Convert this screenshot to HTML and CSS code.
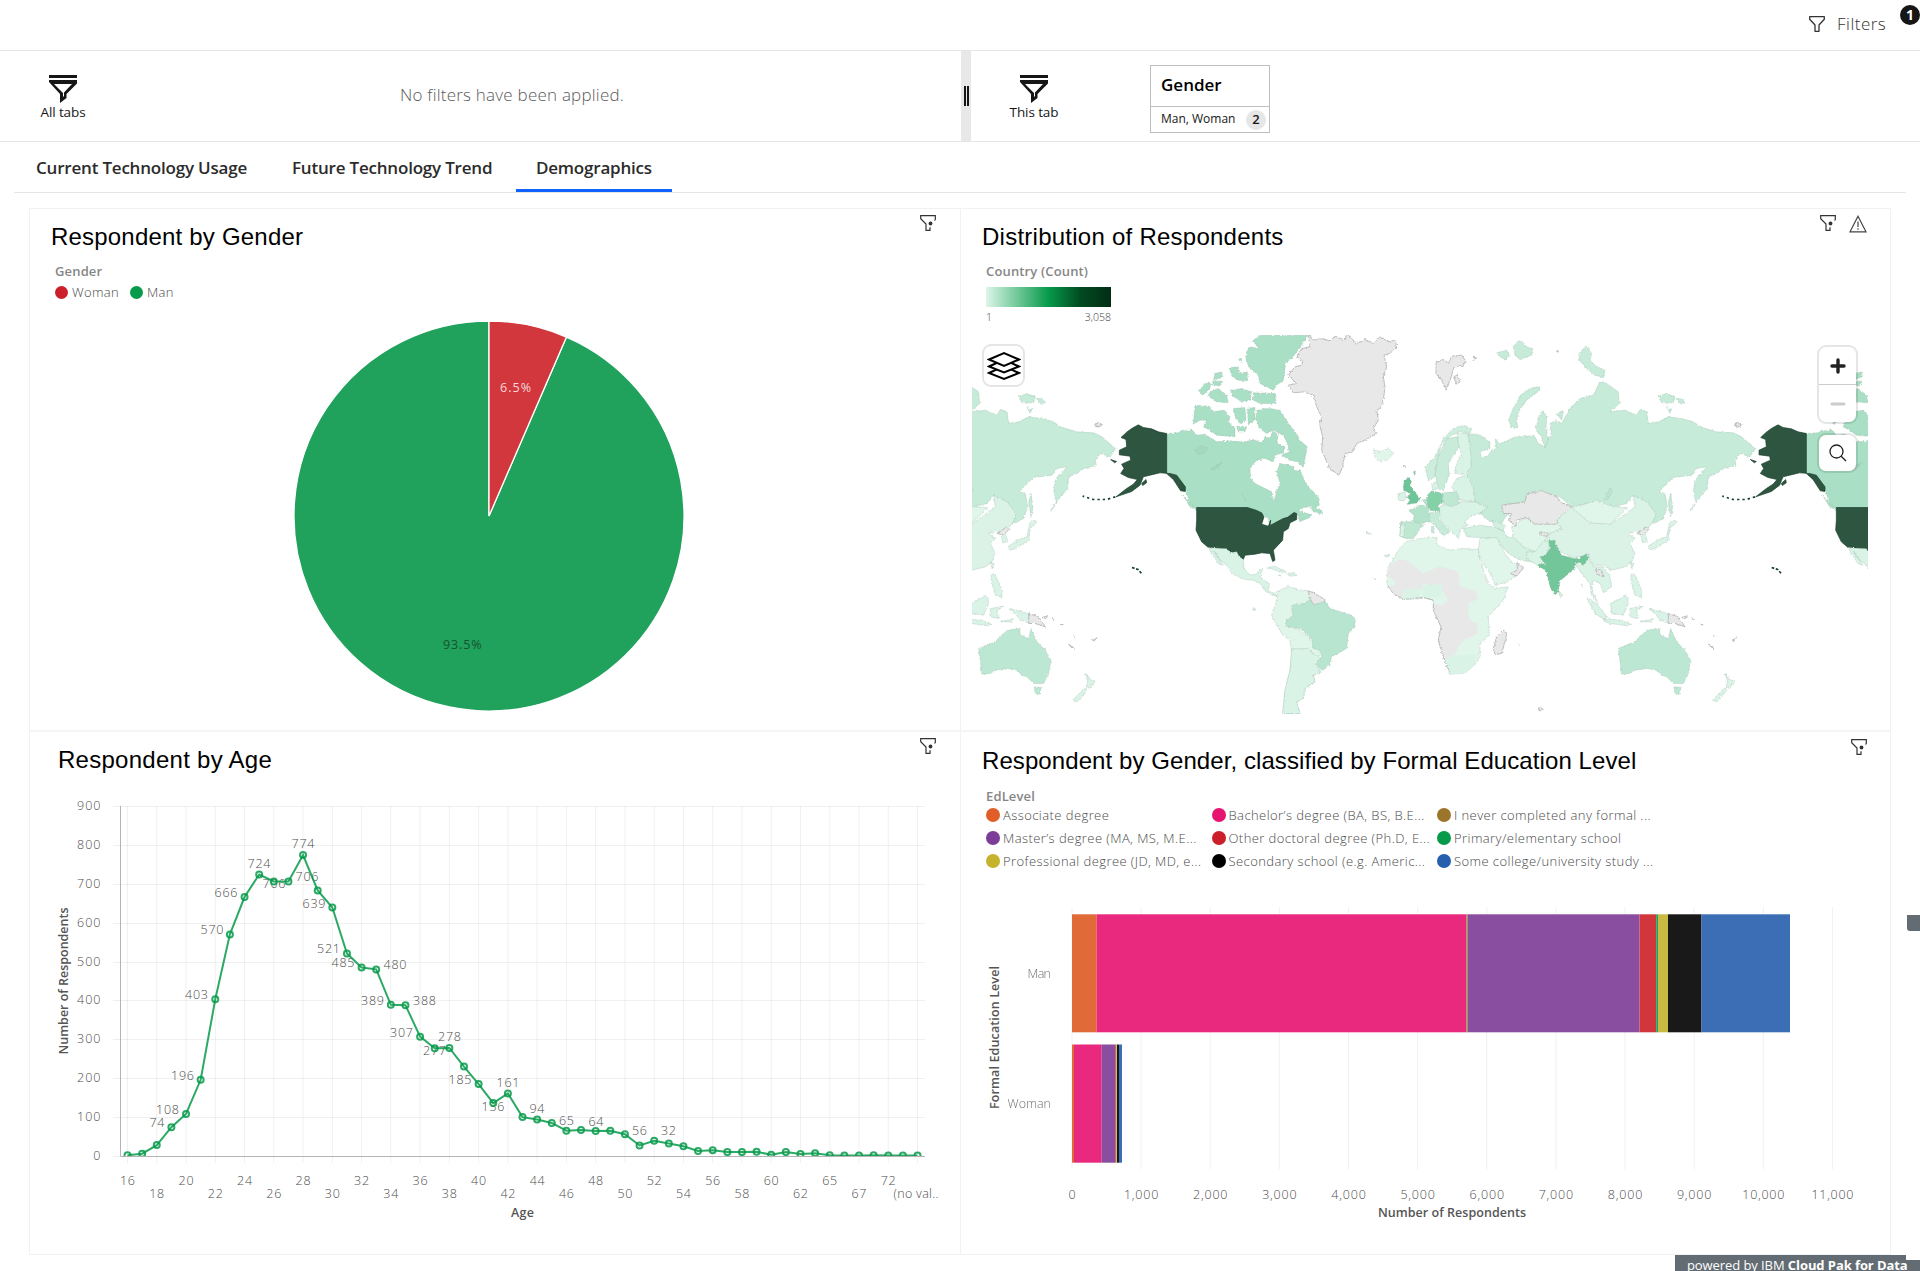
FILE: index.html
```html
<!DOCTYPE html>
<html lang="en">
<head>
<meta charset="utf-8">
<title>Demographics dashboard</title>
<link rel="stylesheet" href="styles.css">
</head>
<body>
<svg class="defs" aria-hidden="true">
  <symbol id="i-filter" viewBox="0 0 16 16"><path d="M.7.7h14.6v2.6L10 9v6.3H6V9L.7 3.300z" fill="none" stroke="currentColor" stroke-width="1.3" stroke-linejoin="round"/></symbol>
  <symbol id="i-filter-dot" viewBox="0 0 16 16"><path d="M14.5 5.500l.8-1V.7H.7v3L6 9v6.300h4v-3" fill="none" stroke="currentColor" stroke-width="1.200"/><circle cx="10.500" cy="8.500" r="1.900" fill="currentColor"/></symbol>
  <symbol id="i-warn" viewBox="0 0 18 18"><path d="M9 1.200 17 16.800H1zM9 6.500v5.500M9 13.200v1.500" fill="none" stroke="currentColor" stroke-width="1.200"/></symbol>
  <symbol id="i-scope" viewBox="0 0 28 28"><path d="M0 0h28v3H0zM0 5h28v3.500L17.500 19v4L11 28V19L0 7zM5 9l9 9v4l1-1v-3.500L23 9z" fill="#161616" fill-rule="evenodd"/></symbol>
</svg>

<header class="topbar">
  <svg class="ic16"><use href="#i-filter"/></svg>
  <span class="filters-label">Filters</span>
  <span class="count">1</span>
</header>

<section class="filterbar">
  <div class="scope"><svg class="ic28"><use href="#i-scope"/></svg><span class="all">All tabs</span></div>
  <div class="nofilters"><span>No filters have been applied.</span></div>
  <div class="divider"><i></i><i></i></div>
  <div class="scope this"><svg class="ic28"><use href="#i-scope"/></svg><span class="this-l">This tab</span></div>
  <div class="fcard">
    <div class="fcard-t"><span>Gender</span></div>
    <div class="fcard-b"><span>Man, Woman</span><b>2</b></div>
  </div>
</section>

<nav class="tabs">
  <a class="t1"><span>Current Technology Usage</span></a><a class="t2"><span>Future Technology Trend</span></a><a class="t3 active"><span>Demographics</span></a>
</nav>

<main class="grid">
  <section class="panel p1">
    <div class="head"><h2><span class="h-a">Respondent by Gender</span></h2><div class="icons"><svg class="ic16"><use href="#i-filter-dot"/></svg></div></div>
    <div class="lt"><span class="lt-a">Gender</span></div>
    <div class="lg"><span class="dot red"></span><span class="lg-w">Woman</span><span class="dot green"></span><span class="lg-m">Man</span></div>
    <svg class="pie" viewBox="0 0 392 392">
      <g stroke="#fff" stroke-width="1.300">
        <path d="M196 196V1A195 195 0 1 0 273.440 17.040z" fill="#20a15c"/>
        <path d="M196 196V1A195 195 0 0 1 273.440 17.040z" fill="#d2373d"/>
      </g>
      <text x="207" y="72" fill="#f6d9da" textLength="31">6.5%</text>
      <text x="150" y="329" fill="#14532f" textLength="38.5">93.5%</text>
    </svg>
  </section>

  <section class="panel p2">
    <div class="head"><h2><span class="h-b">Distribution of Respondents</span></h2><div class="icons"><svg class="ic16"><use href="#i-filter-dot"/></svg><svg class="ic18"><use href="#i-warn"/></svg></div></div>
    <div class="lt"><span class="lt-b">Country (Count)</span></div>
    <div class="ramp"></div>
    <div class="ramp-l"><span>1</span><span>3,058</span></div>
    <div class="map">
      <svg class="world" viewBox="36 45 2688 1136">
        <defs>
        <filter id="coast" x="-2%" y="-2%" width="104%" height="104%">
          <feTurbulence type="fractalNoise" baseFrequency="0.16" numOctaves="2" seed="4"/>
          <feDisplacementMap in="SourceGraphic" scale="9" xChannelSelector="R" yChannelSelector="G"/>
        </filter>
        <g id="am">
          <g class="c-ca" filter="url(#coast)">
            <path d="M614 340 655 338 668 330 690 334 692 326 712 345 735 342 770 365 815 362 850 366 880 358 905 368 915 350 930 356 938 333 955 342 950 370 975 380 970 398 945 405 940 425 915 415 890 420 870 445 872 475 885 490 905 500 935 515 938 538 944 540 950 512 960 490 950 455 960 430 985 435 1000 440 1008 455 1020 448 1030 475 1045 500 1075 530 1078 555 1065 565 1085 570 1088 582 1060 575 1052 560 1030 562 1015 572 1055 584 1050 592 1020 605 1010 578 970 595 930 615 925 595 905 580 890 580 862 572 715 572 690 550 678 515 650 465 614 458z"/>
            <path d="M705 255 745 258 760 275 790 270 810 290 805 305 825 325 825 350 800 348 770 345 750 330 730 320 740 300 720 300 700 312zM820 265 855 262 858 300 840 310 825 290zM862 264 885 262 885 300 865 312zM830 318 860 320 855 335 835 335zM890 270 930 265 960 270 985 310 1010 340 1018 360 1042 380 1030 440 1010 425 990 420 965 405 985 395 985 375 970 345 940 330 920 340 900 325 888 300z"/>
            <path d="M900 45 1045 45 1000 110 975 130 975 150 970 180 950 195 940 210 900 190 895 165 870 145 858 120 860 95 870 80 895 85 880 60zM880 218 945 220 948 250 900 250 880 240zM808 142 835 140 838 160 862 155 862 182 835 180 815 168zM812 210 845 205 875 215 870 240 845 245 815 225zM750 215 775 205 800 225 805 248 770 245 745 228zM716 212 735 190 752 188 750 205 728 225zM765 160 785 155 788 170 760 180zM758 183 788 183 780 197 760 195zM835 115 845 115 845 128zM668 525 685 545 705 562 712 570 690 560z"/>
            <path d="M705 390 720 378 742 382 735 396 715 404zM752 445 785 428 775 442 758 450zM845 520 855 535 858 545" fill="#a2dabd"/>
          </g>
          <g class="c-gr" filter="url(#coast)"><path d="M1045 40 1060 60 1085 55 1110 62 1125 48 1155 60 1160 40 1190 70 1215 58 1240 70 1260 50 1285 65 1305 60 1310 78 1290 100 1272 105 1280 140 1270 170 1275 200 1270 240 1262 262 1250 270 1255 300 1240 325 1250 340 1215 360 1190 370 1178 395 1155 400 1148 440 1138 463 1110 448 1098 420 1085 390 1088 350 1078 310 1085 290 1070 260 1060 225 1030 215 1000 218 985 195 1010 190 985 165 1005 140 1025 135 1028 122 1010 110 1025 85 1050 80zM405 315 415 307 425 315 415 321z"/></g>
          <g class="c-us">
            <path d="M620 340 595 335 575 326 550 322 535 314 515 325 500 336 483 352 498 358 500 380 478 390 478 404 510 408 512 420 485 432 492 445 482 460 505 472 532 478 520 492 500 505 468 530 515 514 540 495 550 470 570 465 600 458 630 460 650 465 676 500 676 514 662 512 640 478 620 460z"/>
            <path d="M545 490 558 478 560 488 548 496zM452 418 470 424 464 428z"/>
            <path d="M466 530 440 538 400 538 368 528" fill="none" stroke-width="4" stroke-dasharray="7 9" class="isles"/>
            <path d="M516 742 534 748 545 760" fill="none" stroke-dasharray="8 5" class="isles"/>
            <path d="M710 562 862 562 888 570 905 578 912 590 905 612 925 618 932 600 930 616 968 596 985 590 1002 577 1010 580 1010 598 990 608 985 625 970 635 968 660 940 690 945 720 938 724 930 700 905 698 885 702 855 705 850 718 838 710 830 695 810 698 800 686 770 684 745 682 725 665 708 630 710 600z"/>
          </g>
          <g filter="url(#coast)">
          <path class="c-p2" d="M745 682 770 684 800 686 812 698 830 695 838 710 850 718 852 745 870 765 890 762 900 745 908 745 900 770 915 782 928 790 925 812 945 822 952 828 935 824 915 810 900 790 880 780 850 778 815 758 800 735 775 715 760 690 790 735 775 730 755 700z"/>
          <path class="c-p2" d="M920 742 945 738 978 755 965 757 940 748zM978 760 1000 758 1012 766 990 768zM955 765 965 765 962 768z"/>
          <path class="c-p1" d="M952 828 950 815 985 798 1010 808 1045 812 1050 830 1045 850 1010 855 995 865 1000 885 980 900 985 920 1010 925 1045 950 1080 1000 1065 1025 1085 1055 1060 1065 1065 1085 1035 1105 1030 1135 1010 1145 1020 1180 968 1180 975 1110 990 1050 995 1000 990 960 965 940 935 885 945 860z"/>
          <path class="c-p2" d="M995 985 1045 985 1060 1000 1085 1015 1070 1030 1080 1060 1060 1065 1065 1085 1035 1105 1030 1135 1010 1145 1020 1180 968 1180 975 1110 990 1050z" stroke="none"/>
          <path class="c-gr" d="M1045 812 1060 818 1095 838 1092 852 1060 853 1050 835z"/>
          <path class="c-br" d="M995 855 1035 850 1050 838 1060 853 1095 845 1110 865 1175 885 1187 900 1180 925 1165 940 1160 985 1115 1010 1110 1030 1088 1052 1068 1030 1085 1010 1080 990 1060 985 1055 955 1020 925 978 918 980 900 1000 888z"/>
          <path class="c-p1" d="M1240 388 1260 395 1285 385 1300 400 1285 418 1260 424 1245 412z"/>
          <path class="c-p2" d="M880 862 888 868 882 872zM1218 636 1236 642 1222 640zM1238 774 1248 778zM1332 436 1338 440z"/>
          </g>
        </g>
        <g id="ea" filter="url(#coast)">
          <g class="c-ru">
            <path d="M265 340 300 345 330 365 330 385 300 395 305 415 325 405 335 390 350 385 345 355 360 370 385 360 405 350 430 350 460 345 475 370 495 380 505 355 515 345 510 310 530 300 545 310 570 265 600 235 640 225 660 185 680 190 715 215 718 250 690 275 735 270 770 285 780 268 800 275 805 310 835 305 865 290 905 295 940 305 960 320 1010 335 1060 338 1085 350 1125 385 1110 410 1080 400 1065 420 1068 435 1030 445 1010 460 985 470 982 505 948 545 940 515 945 480 980 440 950 445 935 465 880 472 850 500 838 515 855 520 862 560 850 595 810 615 820 590 790 555 760 525 740 550 700 560 650 545 620 550 575 560 540 530 510 525 490 512 440 520 435 545 365 555 370 580 385 580 370 600 360 618 325 600 300 580 322 560 285 545 262 520 258 480 265 450 270 400z"/>
            <path d="M475 200 480 210 440 240 415 275 408 300 415 322 395 322 385 300 400 265 425 220 450 205zM468 330 475 290 490 272 500 290 498 325 505 355 495 385 485 350zM350 98 380 90 388 105 375 120 355 105zM400 78 420 60 440 80 458 85 455 105 420 118 405 105zM600 95 620 78 635 100 630 120 650 140 675 150 670 172 645 165 620 145 598 120zM835 228 860 220 885 230 880 248 845 248zM888 235 905 235 915 248 900 250zM860 262 875 268 870 278zM865 545 872 520 878 560 872 590zM530 280 550 270 545 300z"/>
            <path d="M672 540 690 505 698 510 680 540" fill="#bfe6d2"/>
          </g>
          <g class="c-gr"><path d="M168 125 190 118 205 130 215 108 245 105 257 122 250 138 222 140 215 165 210 180 198 210 185 180 168 160zM220 170 232 165 240 185 230 192zM280 110 290 114 282 118zM1063 315 1073 307 1084 315 1073 321zM530 92 537 94 532 97zM475 1163 487 1165 485 1172 477 1171zM70 436 76 438z"/></g>
          <path class="c-no" d="M135 440 165 410 190 355 220 325 250 315 275 325 270 340 240 335 215 345 185 370 175 410 165 470 145 482z"/>
          <path class="c-se" d="M175 410 200 355 232 350 238 380 205 430 208 465 190 510 178 508 165 465z"/>
          <path class="c-p2" d="M232 340 262 340 270 370 275 440 255 462 225 460 228 430 245 405 235 370z"/>
          <path class="c-p2" d="M230 475 260 465 280 500 285 545 240 540 215 500zM155 490 170 485 175 505 158 510z"/>
          <path class="c-p2" d="M175 560 235 545 285 545 322 560 300 580 275 585 255 605 262 615 240 630 235 655 210 630 180 600 160 590 172 570z"/>
          <path class="c-pl" d="M188 518 232 515 238 550 215 560 190 550z"/>
          <path class="c-uk" d="M72 480 88 472 95 485 90 497 108 520 120 535 115 548 80 553 90 540 80 530 92 520 70 510zM100 455 106 452 104 466z"/>
          <path class="c-p2" d="M55 520 75 515 78 530 72 542 55 540z"/>
          <path class="c-fr" d="M85 570 105 565 118 552 145 560 150 605 120 610 100 605 102 585zM128 540 142 535 142 560z"/>
          <path class="c-de" d="M142 525 155 512 168 515 188 520 188 545 175 555 180 572 152 572 142 555z"/>
          <path class="c-pl" d="M62 605 100 605 130 612 110 640 100 655 78 656 60 645z"/><path class="c-p2" d="M62 610 75 612 72 650 60 650z"/>
          <path class="c-it" d="M148 578 180 576 178 600 210 635 200 640 190 648 165 615 150 605zM155 618 163 620 160 640 154 636z"/>
          <path class="c-tr" d="M250 625 300 615 345 622 375 635 380 650 440 660 478 712 470 728 420 720 385 700 360 670 350 655 300 652 260 650zM335 600 375 615 370 632 345 620z"/>
          <path class="c-p1" d="M395 620 440 590 465 612 530 600 545 625 510 640 490 670 465 695 430 680 400 650z"/>
          <path class="c-gr" stroke="none" d="M365 555 435 545 440 522 485 512 530 530 545 548 575 560 565 580 540 595 530 612 465 612 440 592 410 600 408 618 385 600 395 580 370 580zM478 635 510 640 500 648 480 645z"/>
          <path class="c-cn" d="M530 600 575 560 620 585 690 612 740 580 765 560 760 525 800 545 828 580 815 612 790 635 760 635 745 640 765 655 750 670 765 700 755 725 735 740 695 750 670 735 640 735 625 705 580 712 530 690 505 665 490 665 510 640 545 625z"/>
          <path class="c-p1" d="M575 562 620 550 650 540 700 560 740 562 715 590 690 612 630 608z"/>
          <path class="c-gr" d="M770 640 800 620 806 628 790 645z"/>
          <path class="c-p2" d="M782 645 795 640 803 665 788 668zM803 680 830 660 860 650 868 610 880 600 890 605 870 625 865 660 835 680 810 690zM930 570 950 545 935 570z"/>
          <path class="c-p2" d="M440 695 465 695 492 660 508 665 505 690 480 740 440 715z"/>
          <path class="c-p2" d="M585 722 605 738 625 712 640 740 670 740 690 770 695 800 670 818 660 790 640 780 635 800 640 820 655 850 635 825 630 790 610 765 590 740zM535 815 548 825 542 832zM750 725 762 730 755 745z"/>
          <path class="c-in" d="M505 662 525 660 530 680 545 705 582 715 598 714 620 700 627 712 612 735 600 728 585 726 585 745 540 782 535 815 522 822 510 800 498 750 475 740 475 732 495 730 480 712 500 700 510 685zM604 790 608 800z"/>
          <path class="c-gr" d="M648 745 668 755 672 770 650 762z"/>
          <path class="c-p2" d="M620 832 650 850 680 890 675 900 645 880zM692 850 740 825 745 850 730 885 695 880zM670 895 720 900 755 912 740 917 680 908zM750 865 790 858 770 870 775 895 750 890zM752 762 765 765 785 810 785 832 765 825 755 790zM780 905 820 895 815 905zM805 865 865 880 865 908 840 900 825 880z"/>
          <path class="c-gr" d="M865 880 895 890 915 920 885 910 865 910zM905 892 922 887 915 896zM935 893 943 898zM962 912 970 915zM985 972 1002 985 995 984zM1056 960 1070 953 1062 962zM1000 946 1003 948z"/>
          <path class="c-au" d="M715 985 765 965 800 930 838 925 840 945 865 955 872 925 890 965 915 990 932 1020 925 1060 910 1090 880 1090 860 1070 845 1065 830 1050 800 1045 765 1050 750 1060 725 1062zM882 1100 903 1102 898 1122 885 1120z"/>
          <path class="c-p2" d="M1035 1060 1048 1078 1065 1082 1048 1105 1038 1098 1042 1080zM1035 1103 1042 1110 1010 1145 997 1140z"/>
          <path class="c-p1" d="M75 665 120 655 168 650 172 675 210 690 245 685 295 688 300 720 325 790 345 805 385 800 370 840 325 890 328 945 300 970 300 1010 280 1040 250 1060 210 1062 190 1010 175 960 183 920 160 870 160 840 130 832 70 838 40 820 20 790 25 740 50 700z"/>
          <path class="c-gr nb" d="M25 740 50 720 75 718 130 760 180 738 235 755 240 800 285 812 295 835 265 850 268 900 292 910 292 940 245 965 215 1020 190 1010 175 960 183 920 160 870 165 850 185 855 205 840 190 815 170 800 130 790 125 808 70 810 65 838 40 820 22 795 45 795 45 780 22 765zM310 765 325 785 340 800 318 790z"/>
          <path class="c-gr" d="M372 930 380 945 365 1000 345 1003 340 985 350 950z"/>
          <path class="c-p2 nb" d="M128 795 190 790 180 830 130 832zM70 808 118 805 118 838 70 838zM215 1005 260 1005 290 1000 280 1040 250 1060 210 1062 200 1020z"/>
          <path d="M22 795 40 820 70 838 130 832 160 840 160 870 183 920 175 960 190 1010 210 1062" class="shore"/>
          <path class="c-p1" d="M295 690 300 655 350 652 375 700 395 725 430 745 410 765 380 785 345 795 330 760 300 715z"/>
          <path class="c-gr" d="M412 725 430 743 410 768 392 760 412 750z"/>
          <path class="c-p2" d="M12 706 30 704 20 710zM415 972 420 975z"/>
        </g>
        </defs>
        <use href="#ea" x="-659"/>
        <use href="#am"/>
        <use href="#ea" x="1260"/>
        <use href="#am" x="1919"/>
      </svg>
      <div class="mbtn layers"><svg viewBox="0 0 34 30"><g fill="#fff" stroke="#000" stroke-width="2"><path d="M2 22 17 15l15 7-15 6z"/><path d="M2 15.500 17 8.500l15 7-15 6z"/><path d="M2 8.500 17 2l15 6.500-15 6.500z"/></g></svg></div>
      <div class="mbtn zoomer"><span><svg viewBox="0 0 16 16"><path d="M8 2v12M2 8h12" stroke="#222" stroke-width="3.400" stroke-linecap="round"/></svg></span><span><svg viewBox="0 0 16 16"><path d="M2 8h12" stroke="#ccc" stroke-width="3" stroke-linecap="round"/></svg></span></div>
      <div class="mbtn search"><svg viewBox="0 0 18 18"><circle cx="7.500" cy="7.500" r="6.500" fill="none" stroke="#222" stroke-width="1.300"/><path d="M12.200 12.200 17 17" stroke="#222" stroke-width="1.300"/></svg></div>
    </div>
  </section>

  <section class="panel p3">
    <div class="head"><h2><span class="h-c">Respondent by Age</span></h2><div class="icons"><svg class="ic16"><use href="#i-filter-dot"/></svg></div></div>
    <svg class="chart" id="line" viewBox="30 790 929 464"></svg>
  </section>

  <section class="panel p4">
    <div class="head"><h2><span class="h-d">Respondent by Gender, classified by Formal Education Level</span></h2><div class="icons"><svg class="ic16"><use href="#i-filter-dot"/></svg></div></div>
    <div class="lt"><span class="lt-c">EdLevel</span></div>
    <div class="ed">
      <div><span class="dot c1"></span><span>Associate degree</span></div>
      <div><span class="dot c2"></span><span>Bachelor’s degree (BA, BS, B.E...</span></div>
      <div><span class="dot c3"></span><span>I never completed any formal ...</span></div>
      <div><span class="dot c4"></span><span>Master’s degree (MA, MS, M.E...</span></div>
      <div><span class="dot c5"></span><span>Other doctoral degree (Ph.D, E...</span></div>
      <div><span class="dot c6"></span><span>Primary/elementary school</span></div>
      <div><span class="dot c7"></span><span>Professional degree (JD, MD, e...</span></div>
      <div><span class="dot c8"></span><span>Secondary school (e.g. Americ...</span></div>
      <div><span class="dot c9"></span><span>Some college/university study ...</span></div>
    </div>
    <svg class="chart" id="bars" viewBox="961 880 929 374"></svg>
  </section>
</main>
<div class="sidetab"></div>
<div class="powered"><span>powered by IBM <b>Cloud Pak for Data</b></span></div>
<script src="charts.js"></script>
</body>
</html>
```
FILE: styles.css
```css
* { box-sizing: border-box; }
body { margin: 0; width: 1920px; height: 1271px; overflow: hidden; position: relative; background: #fff; font-family: "Open Sans", "Noto Sans", sans-serif; font-weight: 300; color: #161616; }
span { white-space: nowrap; }
.defs { position: absolute; width: 0; height: 0; }
.ic16 { width: 16px; height: 16px; color: #333; display: block; }
.ic18 { width: 18px; height: 18px; color: #444; display: block; }
.ic28 { width: 28px; height: 28px; display: block; }

.topbar { height: 51px; border-bottom: 1px solid #e5e5e5; display: flex; align-items: center; justify-content: flex-end; }
.filters-label { font-size: 17px; letter-spacing: .5px; color: #333; margin-left: 12px; width: 61px; line-height: 46px; margin-bottom: 2px; }
.topbar .ic16 { margin-bottom: 2px; }
.count { width: 20px; height: 20px; border-radius: 50%; background: #161616; color: #fff; font-size: 14px; font-weight: 700; line-height: 19px; text-align: center; align-self: flex-start; margin-top: 5px; margin-left: 2px; }

.filterbar { height: 91px; border-bottom: 1px solid #e5e5e5; display: grid; grid-template-columns: 126px 835px 10px 126px 1fr; }
.scope { display: flex; flex-direction: column; align-items: center; padding-top: 24px; font-size: 13.5px; letter-spacing: -.1px; line-height: 16px; font-weight: 400; }
.scope span { margin-top: 1px; }
.nofilters { font-size: 17px; letter-spacing: .22px; color: #5a5a5a; line-height: 87px; padding-left: 274px; }
.divider { background: #e8e8e8; display: flex; justify-content: center; align-items: center; gap: 1px; }
.divider i { width: 2px; height: 20px; background: #161616; }
.fcard { width: 120px; height: 68px; margin: 14px 0 0 53px; border: 1px solid #bebebe; }
.fcard-t { height: 41px; border-bottom: 1px solid #bebebe; padding-left: 10px; font-size: 17px; font-weight: 600; line-height: 38px; color: #000; }
.fcard-b { display: flex; justify-content: space-between; align-items: center; height: 25px; padding: 0 3px 0 10px; font-size: 12px; font-weight: 400; color: #161616; }
.fcard-b span { margin-top: -2px; }
.fcard-b b { width: 20px; height: 20px; border-radius: 50%; background: #e6e6e6; text-align: center; line-height: 18px; font-size: 13px; font-weight: 600; }

.tabs { margin: 0 14px; height: 51px; border-bottom: 1px solid #e5e5e5; display: flex; font-size: 17px; letter-spacing: -.2px; font-weight: 600; line-height: 52px; color: #2b2b2b; padding-left: 2px; }
.tabs a { padding: 0 20px; height: 50px; }
.t1 { width: 256px; } .t2 { width: 244px; } .t3 { width: 156px; }
.tabs .active { border-bottom: 3px solid #0f62fe; }

.grid { margin: 15px 0 0 29px; width: 1862px; height: 1047px; border: 1px solid #f2f2f2; display: grid; grid-template-columns: 931px 929px; grid-template-rows: 523px 522px; }
.panel { display: flex; flex-direction: column; min-width: 0; }
.p1, .p3 { border-right: 1px solid #f2f2f2; }
.p1, .p2 { border-bottom: 2px solid #f4f4f4; }
.head { display: flex; justify-content: space-between; height: 50px; padding: 6px 24px 0 21px; }
.p2 .head, .p4 .head { padding-right: 23px; }
h2 { margin: 0; font: 400 24px/44px "Liberation Sans", Arial, sans-serif; color: #000; }
.h-a { letter-spacing: .2px; } .h-b { letter-spacing: .25px; } .h-c { letter-spacing: .27px; } .h-d { letter-spacing: .08px; }
.icons { display: flex; gap: 13px; }
.lt { font-size: 13px; letter-spacing: .15px; font-weight: 600; line-height: 18px; height: 20px; padding-left: 25px; margin-top: 3px; color: #868686; }
.lg { display: flex; align-items: center; padding-left: 25px; height: 20px; font-size: 13px; letter-spacing: .35px; color: #4a4a4a; }
.dot { width: 14px; height: 14px; border-radius: 50%; margin-right: 3px; flex: none; }
.lg .dot { width: 13px; height: 13px; margin-right: 4px; }
.lg-w { width: 58px; }
.red { background: #cb1f2a; } .green { background: #069a4a; }
.pie { width: 392px; height: 392px; margin: 18px 0 0 263px; display: block; font-size: 12.5px; font-weight: 400; }

.ramp { width: 125px; height: 20px; margin: 5px 0 0 25px; background: linear-gradient(90deg, #dcf6e8, #069a4a 50%, #014c22 75%, #022d14); }
.ramp-l { width: 125px; margin-left: 25px; display: flex; justify-content: space-between; font-size: 10.5px; line-height: 20px; height: 28px; color: #444; }
.map { position: relative; width: 896px; height: 379px; margin-left: 11px; }
.world { width: 896px; height: 379px; display: block; }
.world path { stroke: #9db8aa; stroke-opacity: .5; stroke-width: 2; }
.c-ca { fill: #a9dfc4; } .c-ru { fill: #c6ebd8; } .c-gr { fill: #e8e8e8; }
.world .c-gr path, .world path.c-gr { stroke: #bdbdbd; stroke-opacity: 1; stroke-width: 3; }
.world path.nb { stroke: none; }
.world path.shore { fill: none; stroke: #bdbdbd; stroke-opacity: 1; stroke-width: 3; }
.c-us { fill: #2e5540; } .world .c-us path { stroke: #16402a; stroke-opacity: 1; }
.world .c-us path.isles { stroke-width: 5; }
.c-p1 { fill: #e0f6ea; } .c-p2 { fill: #d9f3e6; } .c-br { fill: #b7e5cf; } .c-no { fill: #cdeedd; } .c-se { fill: #c9ecda; }
.c-pl { fill: #bfe8d3; } .c-uk { fill: #6cc497; } .c-fr { fill: #b3e3ca; } .c-de { fill: #84d0a7; } .c-it { fill: #c6ebd8; } .c-tr { fill: #d3f0e1; }
.c-cn { fill: #daf3e6; } .c-in { fill: #72c699; } .c-au { fill: #bce8d3; }
.mbtn { position: absolute; background: #fff; border-radius: 7px; box-shadow: 0 0 0 2px rgba(0,0,0,.1); display: flex; align-items: center; justify-content: center; }
.layers { left: 12px; top: 11px; width: 39px; height: 39px; }
.layers svg { width: 34px; height: 30px; }
.zoomer { left: 847px; top: 12px; width: 37px; height: 75px; flex-direction: column; }
.zoomer span { flex: 1; display: flex; align-items: center; }
.zoomer span + span { border-top: 1px solid #ccc; width: 37px; justify-content: center; }
.zoomer svg { width: 16px; height: 16px; }
.search { left: 847px; top: 100px; width: 37px; height: 36px; }
.search svg { width: 18px; height: 18px; }

.p3 .head { padding-left: 28px; } .p4 .head { height: 52px; padding-top: 7px; }
.chart { display: block; flex: none; margin-top: auto; width: 929px; font-size: 12.5px; fill: #4d4d4d; }
#line { height: 464px; } #bars { height: 374px; }
.axis-t { font-size: 12.5px; font-weight: 600; fill: #555; }
.gl { stroke: #000; stroke-opacity: .06; }
.ed { display: grid; grid-template-columns: 225.5px 225.5px 1fr; grid-template-rows: 23px 24px 22px; padding-left: 25px; margin-top: -4px; font-size: 13px; letter-spacing: .43px; color: #4a4a4a; }
.ed div { display: flex; align-items: center; }
.c1 { background: #e05e28; } .c2 { background: #e71370; } .c3 { background: #9c752b; } .c4 { background: #7d3c98; } .c5 { background: #cb1f2a; } .c6 { background: #069a4a; } .c7 { background: #c5b32d; } .c8 { background: #000; } .c9 { background: #265fae; }

.sidetab { position: absolute; left: 1907px; top: 915px; width: 13px; height: 16px; background: #636c72; border-bottom-left-radius: 3px; }
.powered { position: absolute; left: 1675px; top: 1255px; width: 231px; height: 16px; background: #636c72; color: #fff; font-size: 13px; letter-spacing: -.08px; font-weight: 400; line-height: 21px; padding-left: 12px; box-shadow: 14px 5px 0 #636c72; }
.powered b { font-weight: 700; }
```
FILE: charts.js
```js
(function () {
  var NS = 'http://www.w3.org/2000/svg';
  function el(p, n, a, t) {
    var e = document.createElementNS(NS, n);
    for (var k in a) e.setAttribute(k, a[k]);
    if (t !== undefined) e.textContent = t;
    p.appendChild(e);
    return e;
  }
  function label(p, t, x, y, w, anchor, extra) {
    var a = { x: x, y: y, textLength: w, 'text-anchor': anchor || 'middle' };
    for (var k in extra || {}) a[k] = extra[k];
    el(p, 'text', a, t);
  }

  // Respondents per age
  var s = document.getElementById('line');
  var data = [2,6,28,74,108,196,403,570,666,724,706,706,774,683,639,521,485,480,389,388,307,277,278,230,185,136,161,100,94,85,65,67,64,65,56,27,39,32,25,13,15,10,10,11,3,10,5,7,2,1,1,2,1,1,1];
  var X = function (i) { return 127.5 + i * 14.63; };
  var Y = function (v) { return 1156 - v * 0.3888; };
  var i;
  for (i = 0; i <= 9; i++) {
    var gy = Math.round(Y(i * 100)) + 0.5;
    el(s, 'path', { d: 'M113 ' + gy + 'H925', 'class': 'gl' });
    label(s, i * 100, 100.5, gy + 3.5, i ? 23.5 : 7, 'end');
  }
  for (i = 0; i < data.length; i += 2) {
    el(s, 'path', { d: 'M' + X(i) + ' 806V1163', 'class': 'gl' });
    var age = i < 48 ? 16 + i : { 48: 65, 50: 67, 52: 72, 54: '(no val..' }[i];
    label(s, age, i === 54 ? 916 : X(i), i % 4 ? 1198 : 1185, i === 54 ? 45 : 15);
  }
  el(s, 'path', { d: 'M120.5 806V1156.5H925', fill: 'none', stroke: '#b4b4b4' });
  [['774',303,848],['724',259,868],['706',274,888],['706',307,881],['666',226,897],['639',314,908],['570',212,934],['521',328.5,953],['485',343,967],['480',395,969],['403',196.5,998.5],['389',372.5,1005],['388',424.5,1005],['307',401.5,1036.5],['278',449.5,1040.5],['277',434.5,1055],['196',182.5,1079.5],['185',460,1083.5],['108',167.5,1113.5],['74',157,1126.5],['161',508,1087],['136',493,1110.5],['94',537,1112.5],['65',566.5,1124.5],['64',596,1125.5],['56',639.5,1134.5],['32',668.5,1134.5]].forEach(function (d) {
    label(s, d[0], d[1], d[2], d[0].length === 3 ? 23 : 15);
  });
  el(el(s, 'clipPath', { id: 'plot' }), 'rect', { x: 119, y: 790, width: 810, height: 366 });
  var g = el(s, 'g', { 'clip-path': 'url(#plot)', fill: 'none', stroke: '#069a4a', 'stroke-opacity': 0.85, 'stroke-width': 2 });
  el(g, 'path', { d: 'M' + data.map(function (v, k) { return X(k).toFixed(2) + ' ' + Y(v).toFixed(2); }).join('L') });
  data.forEach(function (v, k) { el(g, 'circle', { cx: X(k), cy: Y(v), r: 3 }); });
  label(s, 'Number of Respondents', 0, 0, 147, 'middle', { 'class': 'axis-t', transform: 'translate(68 981) rotate(-90)' });
  label(s, 'Age', 522.5, 1217, 23, 'middle', { 'class': 'axis-t' });

  // Education level per gender
  var b = document.getElementById('bars');
  for (i = 0; i <= 11; i++) {
    var gx = 1072 + i * 69.13;
    el(b, 'path', { d: 'M' + gx + ' 907V1169.5', 'class': 'gl' });
    label(b, (i * 1000).toLocaleString('en-US'), gx, 1199, i === 0 ? 7 : i > 9 ? 42 : 34.5);
  }
  var C = ['#e06a38', '#e9297e', '#a5833f', '#894e9f', '#d2363d', '#1ea45c', '#c9ba43', '#191919', '#3b6eb4'];
  function bar(y, h, x, parts) {
    parts.forEach(function (p) {
      el(b, 'rect', { x: x, y: y, width: p[0] - x, height: h, fill: C[p[1]] });
      x = p[0];
    });
  }
  bar(914.3, 118, 1072, [[1096.7, 0], [1466.3, 1], [1467.7, 2], [1639.5, 3], [1656.2, 4], [1658, 5], [1668, 6], [1701.5, 7], [1790, 8]]);
  bar(1044.5, 118.2, 1072, [[1074, 0], [1101.7, 1], [1115.3, 3], [1116.3, 4], [1117, 6], [1119, 7], [1122, 8]]);
  label(b, 'Man', 1051, 978, 23.5, 'end', { opacity: 0.8 });
  label(b, 'Woman', 1051, 1108, 43.5, 'end', { opacity: 0.8 });
  label(b, 'Formal Education Level', 0, 0, 143, 'middle', { 'class': 'axis-t', transform: 'translate(999 1037.5) rotate(-90)' });
  label(b, 'Number of Respondents', 1452, 1217, 148, 'middle', { 'class': 'axis-t' });
})();
```
